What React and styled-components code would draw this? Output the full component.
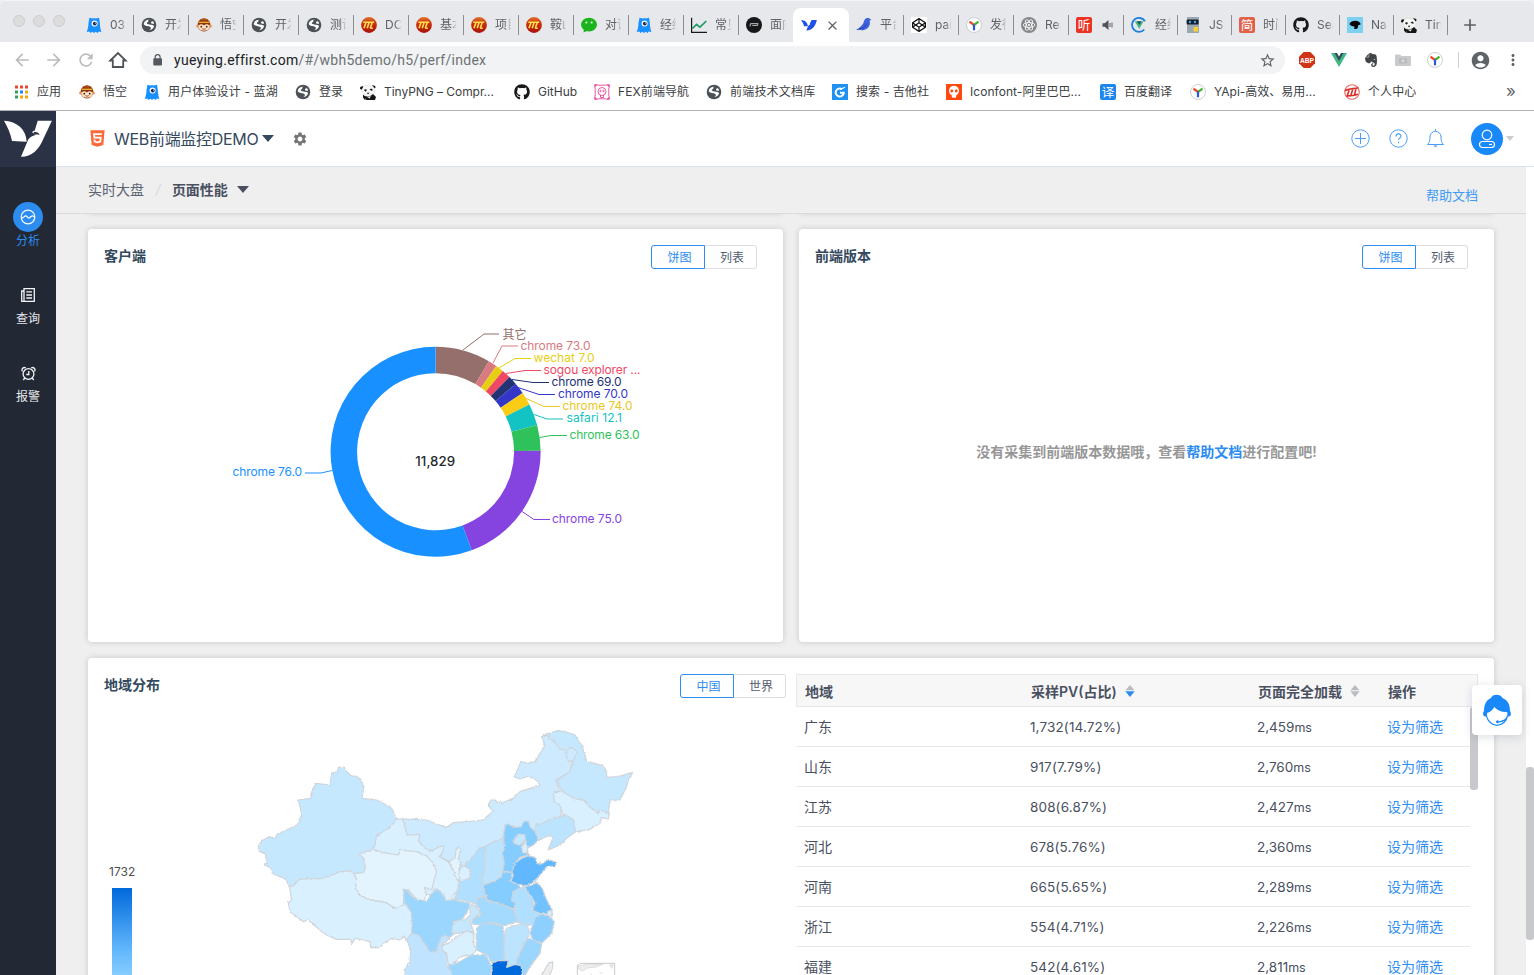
import React from 'react';
import styled, { createGlobalStyle, css } from 'styled-components';
import { MdArrowBack, MdArrowForward, MdRefresh, MdStarBorder, MdAccountCircle, MdMoreVert, MdSettings, MdAdd, MdClose } from 'react-icons/md';
import { FaGithub, FaCodepen, FaEvernote, FaHtml5 } from 'react-icons/fa';

const GlobalStyle = createGlobalStyle`
  * { box-sizing: border-box; }
  html, body { margin: 0; height: 975px; overflow: hidden; }
  body {
    font-family: Inter, "Noto Sans CJK SC", sans-serif;
    font-size: 14px;
    color: #4a5263;
    background: #efefef;
  }
`;

const Window = styled.div`
  position: relative;
  width: 1534px;
  height: 975px;
  display: flex;
  flex-direction: column;
  overflow: hidden;
`;

/* ---------- browser chrome ---------- */

const TabStrip = styled.div`
  flex: none;
  height: 42px;
  display: flex;
  background: #e7e8ec;
  border-top: 1px solid #f3f4f7;
  border-radius: 5px 5px 0 0;
`;

const TrafficLights = styled.div`
  width: 79px;
  height: 40px;
  padding-left: 13px;
  display: flex;
  align-items: center;
  gap: 8px;
`;

const Light = styled.span`
  width: 12px;
  height: 12px;
  border-radius: 50%;
  background: #dcdcdc;
  border: 1px solid #cdcdce;
`;

const TabBox = styled.div`
  position: relative;
  flex: none;
  width: ${(p) => p.$w}px;
  height: 33px;
  margin-top: 7px;
  padding-left: 7px;
  display: flex;
  align-items: center;
  gap: 8px;
  &::after {
    content: '';
    position: absolute;
    right: 0;
    top: 7px;
    width: 1px;
    height: 20px;
    background: ${(p) => (p.$last ? 'transparent' : '#8b8d91')};
  }
`;

const TabText = styled.span`
  width: 16px;
  overflow: hidden;
  white-space: nowrap;
  font-size: 12px;
  line-height: 18px;
  color: #5f6368;
  mask-image: linear-gradient(90deg, #000 65%, transparent 105%);
`;

const ActiveTab = styled.div`
  flex: none;
  width: 56px;
  height: 34px;
  margin: 7px 0 0 -1px;
  padding-left: 8px;
  display: flex;
  align-items: center;
  gap: 8px;
  background: #fff;
  border-radius: 8px 8px 0 0;
  color: #5f6368;
`;

const NewTab = styled.div`
  height: 47px;
  margin-left: 12px;
  display: flex;
  align-items: center;
  color: #5b5e63;
`;

const Toolbar = styled.div`
  flex: none;
  height: 36px;
  display: flex;
  align-items: center;
  background: #fff;
  color: #5f6368;
`;

const NavButtons = styled.div`
  width: 140px;
  padding-left: 12px;
  display: flex;
  align-items: center;
  gap: 12px;
  color: #babcbe;
`;

const Omnibox = styled.div`
  width: 1145px;
  height: 28px;
  padding: 0 9px 0 10px;
  display: flex;
  align-items: center;
  background: #f1f3f4;
  border-radius: 14px;
`;

const Url = styled.div`
  flex: 1;
  margin-left: 9px;
  font-family: Roboto, sans-serif;
  font-size: 14px;
  letter-spacing: 0.27px;
  color: #202124;
  span { color: #6d7176; }
`;

const Extensions = styled.div`
  margin-left: 14px;
  display: flex;
  align-items: center;
  gap: 16px;
`;

const Divider = styled.span`
  width: 1px;
  height: 16px;
  margin: 0 -5px 0 -1px;
  background: #cfd1d3;
`;

const Account = styled.span`
  display: flex;
  margin-right: -3px;
`;

const Bookmarks = styled.div`
  flex: none;
  height: 33px;
  padding: 0 0 4px 13px;
  display: flex;
  align-items: center;
  background: #fff;
  border-bottom: 1px solid #b3b3b5;
`;

const Bookmark = styled.div`
  flex: none;
  width: ${(p) => p.$w}px;
  display: flex;
  align-items: center;
  gap: 8px;
  white-space: nowrap;
  font-size: 12px;
  line-height: 18px;
  color: #3c4043;
  letter-spacing: ${(p) => p.$ls || 0}px;
`;

const More = styled.div`
  margin-left: auto;
  padding: 0 18px 3px 0;
  font-size: 17px;
  line-height: 18px;
  color: #5f6368;
`;

/* ---------- application frame ---------- */

const Main = styled.div`
  flex: 1;
  min-height: 0;
  display: flex;
`;

const Sidebar = styled.nav`
  flex: none;
  width: 56px;
  display: flex;
  flex-direction: column;
  background: #222834;
`;

const LogoBox = styled.div`
  height: 56px;
  margin-bottom: 35px;
  padding: 9px 0 0 4px;
  background: #2c3245;
`;

const SideItem = styled.div`
  height: 78px;
  display: flex;
  flex-direction: column;
  align-items: center;
  font-size: 12px;
  line-height: 17px;
  color: ${(p) => (p.$active ? '#2d8cf0' : '#e8eaed')};
`;

const SideIcon = styled.span`
  width: 30px;
  height: 30px;
  display: flex;
  align-items: center;
  justify-content: center;
  border-radius: 50%;
  color: #f3f4f6;
  background: ${(p) => (p.$active ? '#2d8cf0' : 'transparent')};
`;

const Workspace = styled.div`
  flex: 1;
  min-width: 0;
  display: flex;
  flex-direction: column;
`;

const Header = styled.header`
  flex: none;
  height: 56px;
  padding: 0 20px 0 32px;
  display: flex;
  align-items: center;
  background: #fff;
  border-bottom: 1px solid #d9e2ef;
`;

const AppName = styled.div`
  margin: 0 4px 0 7px;
  font-size: 16px;
  line-height: 24px;
  letter-spacing: -0.3px;
  color: #34495e;
`;

const Caret = styled.span`
  width: 0;
  height: 0;
  border: ${(p) => p.$s || 6}px solid transparent;
  border-top: ${(p) => p.$h || 7}px solid ${(p) => p.$c || '#34495e'};
  border-bottom: 0;
`;

const Gear = styled.span`
  display: flex;
  margin-left: 18px;
  color: #757575;
`;

const HeaderTools = styled.div`
  margin-left: auto;
  display: flex;
  align-items: center;
  gap: 19px;
`;

const Avatar = styled.span`
  width: 32px;
  height: 32px;
  margin: 0 -16px 0 8px;
  border-radius: 50%;
  background: #1989fa;
`;

const Body = styled.div`
  flex: 1;
  min-height: 0;
  display: flex;
`;

const Page = styled.div`
  flex: 1;
  min-width: 0;
  display: flex;
  flex-direction: column;
`;

const Crumbs = styled.div`
  flex: none;
  height: 47px;
  padding: 0 48px 2px 32px;
  display: flex;
  align-items: center;
  color: #5c6472;
  border-bottom: 1px solid #dadada;
  i { margin: 0 11.5px; color: #d3d5d8; font-weight: 300; }
  b { margin-right: 9px; color: #4a5060; }
  a { margin: 10px 0 0 auto; font-size: 13px; color: #409bf5; }
`;

const Track = styled.div`
  flex: none;
  width: 8px;
  padding-top: 600px;
  background: #fff;
`;

const Thumb = styled.div`
  width: 8px;
  height: ${(p) => p.$h}px;
  border-radius: 3px;
  background: #c7c9cc;
`;

const Content = styled.div`
  flex: 1;
  min-height: 0;
  overflow: hidden;
  padding: 0 32px;
  display: flex;
  flex-direction: column;
  gap: 16px;
`;

const CardRow = styled.div`
  flex: none;
  height: ${(p) => p.$h}px;
  margin-top: ${(p) => p.$mt || 0}px;
  display: flex;
  gap: 16px;
`;

const Card = styled.section`
  flex: 1;
  min-width: 0;
  display: flex;
  flex-direction: ${(p) => (p.$row ? 'row' : 'column')};
  background: #fff;
  border-radius: 4px;
  box-shadow: 0 0 6px rgba(0, 0, 0, 0.17);
`;

const CardHead = styled.div`
  flex: none;
  height: 40px;
  padding: 16px ${(p) => p.$pr}px 0 16px;
  display: flex;
  justify-content: space-between;
  align-items: flex-start;
`;

const CardTitle = styled.h2`
  margin: 0;
  font-size: 14px;
  line-height: 21px;
  font-weight: 600;
  color: #34495e;
`;

const Toggle = styled.div`
  display: flex;
`;

const ToggleButton = styled.button`
  width: ${(p) => (p.$active ? 54 : 52)}px;
  height: 24px;
  padding: 0 0 1px 3px;
  font: 12px Inter, "Noto Sans CJK SC", sans-serif;
  background: #fff;
  ${(p) => p.$active
    ? css`color: #2d8cf0; border: 1px solid #2d8cf0; border-radius: 3px 0 0 3px;`
    : css`color: #515a6e; border: 1px solid #dcdee2; border-left: 0; border-radius: 0 3px 3px 0;`}
`;

const Empty = styled.div`
  flex: 1;
  padding-top: 171px;
  text-align: center;
  line-height: 24px;
  font-weight: 600;
  color: #979797;
  span { color: #2d8cf0; }
`;

const ChartSvg = styled.svg`
  display: block;
  font-family: Inter, "Noto Sans CJK SC", sans-serif;
`;

const RegionPane = styled.div`
  flex: none;
  width: 708px;
  display: flex;
  flex-direction: column;
`;

const MapArea = styled.div`
  display: flex;
`;

const Legend = styled.div`
  width: 152px;
  padding: 165px 0 0 21px;
  font-size: 12px;
  line-height: 18px;
  color: #4f4f4f;
`;

const LegendBar = styled.div`
  width: 20px;
  height: 120px;
  margin: 7px 0 0 3px;
  background: linear-gradient(#0069db, #5fb5fb 60px, #85ccff 87px);
`;

const Table = styled.div`
  width: 682px;
  margin-top: 16px;
`;

const HeadRow = styled.div`
  height: 33px;
  padding: 0 0 0 8px;
  display: grid;
  grid-template-columns: 226px 227px 130px 1fr;
  align-items: center;
  border: 1px solid #e6e8eb;
  background: #f7f7f8;
  font-weight: 600;
  color: #495060;
`;

const HeadCell = styled.span`
  display: flex;
  align-items: center;
  gap: 8px;
`;

const TableBody = styled.div`
  display: flex;
`;

const Rows = styled.div`
  width: 674px;
`;

const Row = styled.div`
  height: 40px;
  padding: 0 0 0 8px;
  display: grid;
  grid-template-columns: 226px 227px 130px 1fr;
  align-items: center;
  line-height: 20px;
  border-bottom: 1px solid #e6e8eb;
  color: #495060;
  small { font-size: 12.5px; }
  a { color: #2d8cf0; }
`;

const Num = styled.span`
  padding-top: 1px;
  font-size: 13.5px;
  letter-spacing: ${(p) => (p.$wide ? 0.13 : 0)}px;
`;

const Support = styled.div`
  position: absolute;
  left: 1472px;
  top: 685px;
  width: 50px;
  height: 50px;
  padding: 9px 0 0 10px;
  background: #fff;
  border-radius: 4px;
  box-shadow: 0 2px 10px rgba(40, 60, 90, 0.17);
`;

/* ---------- favicons ---------- */

const Glyph = styled.svg`
  flex: none;
  display: block;
`;

const Ico = ({ children, s = 16, vb = 16 }) => (
  <Glyph width={s} height={s} viewBox={`0 0 ${vb} ${vb}`}>{children}</Glyph>
);

const Lanhu = () => (
  <Ico>
    <path d="M3.500.800 6.500 1.500c1-.3 2.500-.3 3.500 0l3-.7.8 5c.2 3.500.5 5.900 1.600 9.300l-2.700-.5-1 1.300-2-1.200-1.700 1.200-1.600-1.200-2 1.200-1-1.300L.7 15c1.300-3.300 1.700-6 1.800-9.300z" fill="#1890ff" />
    <circle cx="8.600" cy="6.600" r="3" fill="#fff" />
    <circle cx="8.800" cy="6.600" r="1.900" fill="#14284b" />
    <circle cx="9.500" cy="6" r=".6" fill="#fff" />
  </Ico>
);
const Globe = () => (
  <Ico>
    <circle cx="8" cy="8" r="7.300" fill="#4b5157" />
    <path d="M2.800 7.600C2.500 4.500 5.500 2.600 8.500 2.700 7 3.300 6.500 4.200 7.500 4.700c-1.500.3-2.500 1.600-1 2.300 2 .8 5 .3 6.600 2-.6 2.400-2.600 4-5 4.200 1.800-1 2.400-2.200 1.200-3.200C7.500 9 4.300 9.300 2.800 7.600z" fill="#fff" />
    <path d="M10 5.200c.5-1 1.500-1.200 2-.9.600.7 1 1.500 1.100 2.300-1.300.5-3.300 0-3.100-1.400z" fill="#fff" />
  </Ico>
);
const Monkey = () => (
  <Ico>
    <path d="M1.800 6.500C2.500 3 5 2 8 2s5.500 1 6.200 4.500c.8 4-2 8-6.200 8s-7-4-6.200-8z" fill="#8a3410" />
    <path d="M3.500 2.500 8 1l4.500 1.500L10 3.400H6z" fill="#b14f1b" />
    <path d="M2.500 5.300h11" stroke="#f2b52b" strokeWidth="1.300" />
    <circle cx="1.700" cy="9" r="1.600" fill="#e58f54" /><circle cx="14.300" cy="9" r="1.600" fill="#e58f54" />
    <path d="M2.700 8.500c1.500-1.700 3.800-1.300 5.300 0 1.500-1.300 3.800-1.700 5.300 0 .8 3.300-1.500 5.200-5.300 5.200S1.900 11.800 2.700 8.500z" fill="#fde3c6" />
    <circle cx="5.300" cy="9.700" r=".9" fill="#3c1d0d" /><circle cx="10.700" cy="9.700" r=".9" fill="#3c1d0d" />
    <path d="M6.300 11.700q1.700 1 3.400 0" stroke="#a5472c" fill="none" />
  </Ico>
);
const GoldM = () => (
  <Ico>
    <defs><linearGradient id="gm" x1="0" y1="0" x2="0" y2="1"><stop offset="0" stopColor="#e0722c" /><stop offset=".4" stopColor="#cc2f0c" /><stop offset="1" stopColor="#a8140a" /></linearGradient></defs>
    <circle cx="8" cy="8" r="7.900" fill="url(#gm)" />
    <path d="M2.300 5.200h10.900M3 11.300l2-5.800M6.200 11.300l1.900-5.800M9.300 11.200l1.900-5.700M9.200 11.200h2.600" stroke="#ffdf4d" strokeWidth="1.600" fill="none" />
  </Ico>
);
const RedM = () => (
  <Ico>
    <circle cx="8" cy="8" r="7.300" fill="#fff" stroke="#e36a5e" strokeWidth="1.100" />
    <path d="M1 6.800C4 4.500 8 5 14.500 3.800M3.300 11.500 5.200 6M6.800 11.500 8.700 5.500M10.300 11.300 12 5M2 12.300c4-1 7-.2 12-2" stroke="#d9302c" strokeWidth="1.600" fill="none" />
  </Ico>
);
const WeChat = () => (
  <Ico>
    <ellipse cx="8" cy="7.600" rx="8" ry="6.800" fill="#1cb41c" /><path d="M3 12l-.5 3.500L7 13.500z" fill="#1cb41c" />
    <circle cx="5.400" cy="5.600" r="1" fill="#fff" /><circle cx="10.600" cy="5.600" r="1" fill="#fff" />
  </Ico>
);
const ChartFav = () => (
  <Ico><path d="M.6.800v14.600H16" stroke="#181818" strokeWidth="1.200" fill="none" /><path d="m1.500 11.500 4-4 3.500 2.700L15.300 4" stroke="#1d9c63" strokeWidth="1.700" fill="none" /></Ico>
);
const DarkDisc = () => (
  <Ico><circle cx="8" cy="8" r="8" fill="#17181a" /><path d="M4.200 9.500V7.600q0-1 1-1h6.600v.9q0 1-1 1H6.300" stroke="#a9a9a9" strokeWidth="1.100" fill="none" /></Ico>
);
const BlueBird = () => (
  <Ico><path d="M0 3.300c4 0 6.300 1.700 6.900 6L3 9.200C2.500 6.500 1.200 5 0 3.300z" fill="#1f51ea" /><path d="M10.700 3h5.200c-1.500 5.500-4 10.700-10.600 10.500C6.500 11 7 8.300 9.200 7.300 9 6.500 8.800 6.200 9.200 5.800z" fill="#1f51ea" /></Ico>
);
const Pigeon = () => (
  <Ico><path d="M0 12.500c3-.5 4.500-3 6.500-5C8 6 7.500 3.500 9 2.200c1-1.100 3-1.500 4.500-.7l2 1.500-2 .6c1.300 3.500-.3 7.200-3.500 8.600L5.500 13.800l.5-1.300C4 13.200 2 13.200 0 12.500z" fill="#3c62dd" /><path d="M3 11.700c3 .2 6-1 7.500-5" stroke="#223e9c" fill="none" /></Ico>
);
const CodepenFav = () => <Ico><rect width="16" height="16" fill="#fff" /><FaCodepen x="1" y="1" size={14} color="#111" /></Ico>;
const YApi = () => (
  <Ico>
    <circle cx="8" cy="8" r="7.500" fill="#fff" stroke="#c5c9cf" strokeWidth=".9" />
    <path d="M8 8 3.500 4.700" stroke="#f0442c" strokeWidth="2.200" /><path d="m8 8 4.500-3.300" stroke="#42b72a" strokeWidth="2.200" /><path d="M8 7.500v5.800" stroke="#2756e8" strokeWidth="2.200" />
  </Ico>
);
const Atom = () => (
  <Ico>
    <circle cx="8" cy="8" r="8" fill="#85888b" />
    <g fill="none" stroke="#fff" strokeWidth=".8"><ellipse cx="8" cy="8" rx="5.800" ry="2.500" /><ellipse cx="8" cy="8" rx="5.800" ry="2.500" transform="rotate(60 8 8)" /><ellipse cx="8" cy="8" rx="5.800" ry="2.500" transform="rotate(120 8 8)" /></g>
    <circle cx="8" cy="8" r="1.100" fill="#fff" />
  </Ico>
);
const CharFav = ({ c, bg, r = 2 }) => (
  <Ico><rect width="16" height="16" rx={r} fill={bg} /><text x="8" y="12.500" fontSize="12.500" textAnchor="middle" fill="#fff" fontFamily="Noto Sans CJK SC, sans-serif">{c}</text></Ico>
);
const VueRing = () => (
  <Ico><path d="M14 4.200A7 7 0 1 0 13.300 12.500" stroke="#1d7fe0" strokeWidth="1.800" fill="none" /><path d="M3.800 4.200h8.800L8.200 12z" fill="#41b883" /><path d="M6 4.200h4.400L8.200 8z" fill="#34495e" /></Ico>
);
const VueFav = () => <Ico><path d="M0 1h16L8 15z" fill="#41b883" /><path d="M3.500 1h9L8 9z" fill="#35495e" /><path d="M6 1h4L8 4.500z" fill="#fff" /></Ico>;
const Robot = () => (
  <Ico><rect x="2" width="12" height="16" fill="#9ba8b3" /><rect x="1.600" y="2.500" width="12" height="5" rx="1" fill="#17202a" /><circle cx="5" cy="5" r="1.200" fill="#46a6f1" /><circle cx="10" cy="5" r="1.200" fill="#46a6f1" /><rect x="8.500" y="10" width="4.500" height="4.500" fill="#f8d02f" /></Ico>
);
const Duck = () => (
  <Ico><rect width="16" height="16" fill="#7cd0f0" /><path d="M2.500 7c1-2.500 4.500-3.700 7.500-3 2 .7 3.300 1.700 3.800 3.200L11 8.500v2L9.500 12H7.300V9.500C5 9.300 3 8.500 2.500 7z" fill="#060606" /></Ico>
);
const Panda = () => (
  <Ico>
    <path d="M2 3C4 .800 11.500.800 14 3.500c2 3 .5 6.500-1.500 7.500H5C2.500 10 1.500 6 2 3z" fill="#f7f7f5" stroke="#cfcfcc" strokeWidth=".4" />
    <path d="M0 4.200C.2 2.500 2 1.800 3.300 2.800L1.800 5.500C1 5.500 0 5.200 0 4.200zM12 1.300c1.500-.5 3.500.5 3.700 2L14.500 4.500C14 3 13 2.200 12 1.300zM4 6c1-1.200 2.500-.8 3 0L5.500 7.700zM9.500 5.800c.5-1 2-1.500 2.800-.8l.2 2zM6.800 8.800h2.700L8 10.200zM3 10.500c2 2.500 6 3 10-.5L16 13l-1 3H5L3 13.500z" fill="#161616" />
    <path d="m7 12.700 4-.5-1.500 2.300zM5 14.500l1.500 1H5z" fill="#eee" />
  </Ico>
);
const FexFav = () => (
  <Ico><g fill="none" stroke="#e8499a" strokeWidth=".9"><path d="M3.500 1.200h9M1.200 3.500v9M14.800 3.500v9M3.500 14.800h9" /><circle cx="8" cy="7.500" r="4" /><circle cx="6.500" cy="7" r=".7" /><circle cx="9.500" cy="7" r=".7" /><path d="M6.500 11v2.500h3V11" /></g><g fill="#e8499a"><path d="M.3.300h3.700L.3 4zM15.700.300V4L12 .300zM.3 15.700V12L4 15.700zM15.700 15.700H12l3.700-3.700z" /></g></Ico>
);
const Guitar = () => (
  <Ico><rect width="16" height="16" fill="#2090f3" /><path d="M10 5.200A4 4 0 1 0 11.700 8.800H8" stroke="#fff" strokeWidth="2" fill="none" /><path d="m8.500 5.200 4.500-2" stroke="#fff" strokeWidth="1.200" /></Ico>
);
const Iconfont = () => (
  <Ico><rect width="16" height="16" fill="#ff4710" /><circle cx="8" cy="6.800" r="5" fill="#fff" /><rect x="5.800" y="10.500" width="4.400" height="3.300" rx="1" fill="#fff" /><circle cx="5.800" cy="7" r="1.400" fill="#ff4710" /><circle cx="10.200" cy="7" r="1.400" fill="#ff4710" /></Ico>
);
const Apps = () => (
  <Ico>
    {['#ea4335', '#ea4335', '#ea4335', '#34a060', '#1a84ff', '#f4a80a', '#34a060', '#f4a80a', '#f4a80a'].map((c, i) => (
      <rect key={i} x={2 + (i % 3) * 5} y={1.5 + Math.floor(i / 3) * 5} width="3" height="3" fill={c} />
    ))}
  </Ico>
);
const GithubFav = () => <Ico><FaGithub size={16} color="#17181a" /></Ico>;
const Abp = () => (
  <Ico><path d="M4.700 0h6.600L16 4.700v6.600L11.300 16H4.700L0 11.300V4.700z" fill="#cf3417" /><text x="8" y="11" textAnchor="middle" fontSize="8" fontWeight="700" fill="#fff" fontFamily="Liberation Sans, sans-serif" textLength="14" lengthAdjust="spacingAndGlyphs">ABP</text></Ico>
);
const Folder = () => (
  <Ico><path d="M0 3.500q0-1 1-1h4l1.500 1.500H15q1 0 1 1V13q0 1-1 1H1q-1 0-1-1z" fill="#c9cbcd" /><rect x="4" y="6" width="8" height="5.500" rx="1" fill="#b8bbbe" /><circle cx="8" cy="8.700" r="1.700" fill="#d5d7d8" /></Ico>
);
const Speaker = () => (
  <Ico><path d="M2.500 6.300h2.200L8.500 3v10L4.700 9.700H2.500z" fill="#4f5358" /><path d="M10 6v4M12 5.500v5" stroke="#5f6368" /></Ico>
);

const TABS_LEFT = [
  [Lanhu, '03'], [Globe, '开发'], [Monkey, '悟空'], [Globe, '开发'], [Globe, '测试'], [GoldM, 'DC'], [GoldM, '基本'],
  [GoldM, '项目'], [GoldM, '鞍山'], [WeChat, '对话'], [Lanhu, '经纬'], [ChartFav, '常见'], [DarkDisc, '面向'],
];
const Ting = () => <CharFav c="听" bg="#ec3323" />;
const Jian = () => <CharFav c="简" bg="#e2604a" />;
const Yi = () => <CharFav c="译" bg="#1c86ee" />;
const TABS_RIGHT = [
  [Pigeon, '平台', 55], [CodepenFav, 'pai', 55], [YApi, '发行', 55], [Atom, 'Rea', 55], [Ting, null, 55], [VueRing, '经纬', 54],
  [Robot, 'JS', 54], [Jian, '时间', 54], [GithubFav, 'Sea', 54], [Duck, 'Nat', 54], [Panda, 'Tiny', 54],
];
const BOOKMARKS = [
  [Apps, '应用', 66], [Monkey, '悟空', 65], [Lanhu, '用户体验设计 - 蓝湖', 151, 0.15], [Globe, '登录', 65],
  [Panda, 'TinyPNG – Compr...', 154, -0.05], [GithubFav, 'GitHub', 80], [FexFav, 'FEX前端导航', 112, 0.1], [Globe, '前端技术文档库', 126, 0.2],
  [Guitar, '搜索 - 吉他社', 114, 0.1], [Iconfont, 'Iconfont-阿里巴巴...', 154, 0.05], [Yi, '百度翻译', 90], [YApi, 'YApi-高效、易用...', 154], [RedM, '个人中心', 90, 0.1],
];

/* ---------- donut chart ---------- */

const CX = 347.6;
const CY = 182.7;
const SLICES = [
  [0, 30.5, '#946f6b'], [30.5, 35.3, '#d97a80'], [35.3, 39.8, '#e6cf13'], [39.8, 44.7, '#ef4864'], [44.7, 49.8, '#223273'],
  [49.8, 56, '#3436c7'], [56, 63.3, '#facc14'], [63.3, 75.2, '#13c2c2'], [75.2, 89.5, '#2fc25b'], [89.5, 159.9, '#8543e0'], [159.9, 360, '#1890ff'],
];
const pt = (deg, r) => {
  const a = (deg * Math.PI) / 180;
  return `${(CX + r * Math.sin(a)).toFixed(2)} ${(CY - r * Math.cos(a)).toFixed(2)}`;
};
const arc = (a, b) => {
  const big = b - a > 180 ? 1 : 0;
  return `M${pt(a, 105)}A105 105 0 ${big} 1 ${pt(b, 105)}L${pt(b, 78.5)}A78.5 78.5 0 ${big} 0 ${pt(a, 78.5)}Z`;
};
/* label: text, x, baseline, width, colour, leader points */
const LABELS = [
  ['其它', 414.5, 69.5, 24, '#946f6b', '375,81 396,65 411,65'],
  ['chrome 73.0', 432.5, 81, 70, '#d97a80', '405,94 414,77 430,77'],
  ['wechat 7.0', 445.5, 93, 61, '#e6cf13', '411,99 427,89.5 443,89.5'],
  ['sogou explorer ...', 455.5, 105, 97, '#ef4864', '418,104.5 437,101.5 453,101.5'],
  ['chrome 69.0', 463.5, 117, 70, '#223273', '424,110.5 445,113.5 461,113.5'],
  ['chrome 70.0', 470, 129, 70, '#3436c7', '430,118.5 451,125.5 467,125.5'],
  ['chrome 74.0', 474.5, 141, 70, '#e9c727', '437,129 456,137.5 472,137.5'],
  ['safari 12.1', 478.5, 153, 55.5, '#13c2c2', '446,145.5 459,150 475,150'],
  ['chrome 63.0', 481.5, 170, 70, '#2fc25b', '451.5,168.5 463,166.5 479,166.5'],
  ['chrome 75.0', 464, 254, 70, '#8543e0', '434,242.5 446,250.5 462,250.5'],
  ['chrome 76.0', 144.5, 207, 69.5, '#1890ff', '244,201.5 233,204 217,204'],
];

const Donut = () => (
  <ChartSvg width="695" height="373" viewBox="0 0 695 373">
    {SLICES.map(([a, b, c]) => <path key={a} d={arc(a, b)} fill={c} />)}
    {LABELS.map(([t, x, y, w, c, p]) => (
      <g key={t}>
        <polyline points={p} fill="none" stroke={c} />
        <text x={x} y={y} fontSize="12" fill={c} textLength={w}>{t}</text>
      </g>
    ))}
    <text x={CX - 0.4} y="197" fontSize="13.3" fontWeight="500" fill="#26292e" textAnchor="middle">11,829</text>
  </ChartSvg>
);

/* ---------- province map (three units to the pixel) ---------- */

const PROVINCES = [
  ['#cdeaff', '487,297 560,300 590,312 620,322 640,308 700,303 730,300 760,272 745,258 752,240 765,240 772,247 790,247 820,235 840,215 880,202 900,198 895,185 880,175 860,170 840,177 822,170 835,145 842,125 865,130 885,125 900,100 915,75 905,50 920,42 955,32 990,85 1010,95 995,130 990,155 948,180 960,215 945,215 945,240 960,255 965,290 895,315 885,335 870,345 820,345 792,352 760,368 735,380 718,390 700,415 685,445 650,475 625,423 600,410 605,400 612,378 595,380 575,395 555,385 535,362 540,342 525,345 500,345 495,320'],
  ['#d8f0ff', '470,297 487,297 495,320 500,345 525,345 540,342 535,362 555,385 575,395 592,382 612,378 608,395 598,410 625,425 640,450 655,480 655,510 640,525 635,540 618,542 610,520 585,505 575,525 545,520 560,405 480,405 440,408 398,388 405,375 408,350 425,337 452,320'],
  ['#d8f0ff', '665,435 690,445 693,470 670,487 653,480 655,460'],
  ['#c5e8ff', '295,142 313,142 320,155 335,168 347,168 362,178 372,200 366,235 410,240 430,250 455,265 470,297 452,320 425,337 408,350 405,375 398,388 358,402 370,415 376,440 372,458 342,460 330,453 300,455 270,468 240,477 200,475 175,480 160,498 148,500 138,478 120,470 100,462 95,447 72,432 82,430 75,400 58,395 55,378 65,362 88,350 105,355 112,342 140,330 172,315 185,285 178,250 172,240 212,235 215,215 228,190 270,195 275,160 292,155'],
  ['#d8f0ff', '148,500 160,498 175,480 200,475 240,477 270,468 300,455 330,453 342,460 350,480 347,505 360,525 385,538 440,548 465,565 490,545 513,575 517,610 515,640 500,660 490,648 480,660 455,655 430,672 420,683 392,683 390,665 370,660 345,655 335,672 332,658 290,658 265,648 245,635 205,600 190,605 170,590 150,575 145,548 155,540'],
  ['#e3f4ff', '358,402 398,388 430,398 475,405 482,388 500,392 530,395 560,408 580,430 590,455 582,480 575,510 553,502 560,525 550,545 530,540 505,510 492,508 490,555 465,565 440,548 385,538 360,525 347,505 350,480 342,460 372,458 376,440 370,415'],
  ['#c5e8ff', '905,50 920,42 955,32 985,38 1005,45 1025,75 1035,105 1040,125 1090,137 1100,155 1100,172 1135,170 1178,157 1165,180 1160,200 1140,240 1110,240 1105,280 1080,270 1075,280 1050,262 1030,240 1000,235 965,212 950,180 990,155 1000,125 985,122 980,110 985,88 960,88 940,60 925,55 930,45'],
  ['#cdeaff', '978,92 995,82 1012,95 1000,122 985,124 980,110'],
  ['#d8f0ff', '940,220 965,212 1000,235 1030,240 1050,262 1075,280 1080,270 1108,280 1105,297 1085,293 1080,310 1050,328 1015,335 1005,330 1000,300 970,285 960,255 943,245'],
  ['#bde4ff', '890,307 895,315 940,295 965,290 975,283 1000,300 1007,335 980,355 960,375 925,390 938,355 930,345 915,352 895,362 890,345 883,335'],
  ['#85ccff', '795,315 805,313 825,322 845,320 850,305 865,303 870,320 885,335 895,360 880,375 862,385 865,405 840,412 825,430 817,457 787,453 792,430 787,400 793,380 790,352'],
  ['#c5e8ff', '822,357 835,342 857,345 855,362 840,375 822,370'],
  ['#d8f0ff', '845,378 857,360 863,385 860,400 847,397'],
  ['#bde4ff', '738,378 760,365 790,355 793,380 787,400 792,430 787,455 785,470 760,485 730,495 727,480 735,440 733,400'],
  ['#b0dfff', '718,385 738,378 733,400 735,440 727,480 730,500 735,530 712,535 708,552 665,540 640,540 655,510 657,485 690,475 692,450 672,435 695,415'],
  ['#e3f4ff', '655,380 663,390 655,415 662,430 655,465 660,480 650,478 640,450 625,425 645,415 648,390'],
  ['#62b8ff', '815,457 825,430 845,415 865,407 885,412 890,430 905,432 925,418 950,428 945,438 920,440 900,465 880,487 860,497 830,492 812,485 820,465'],
  ['#85ccff', '730,495 760,485 785,470 787,455 817,457 812,485 838,497 838,507 820,515 815,540 828,550 822,568 800,560 770,548 745,545 735,520'],
  ['#b0dfff', '838,505 855,500 865,520 875,530 880,550 878,570 900,580 885,612 860,617 830,605 825,570 828,550 815,540 820,515'],
  ['#72c2ff', '855,500 880,495 887,487 905,500 920,540 937,570 925,583 900,580 878,572 885,550 875,530 865,520'],
  ['#d8f0ff', '922,575 935,570 938,587 923,590'],
  ['#a5daff', '712,535 735,530 745,545 770,548 822,568 830,605 795,617 750,607 725,615 695,612 700,595 722,585 718,565 708,553'],
  ['#9bd6ff', '492,508 505,512 512,525 530,540 560,543 575,520 590,507 605,520 618,542 640,540 690,550 685,570 665,600 640,605 645,640 625,655 605,650 595,670 590,695 570,697 550,665 535,645 515,640 517,600 513,575 492,545'],
  ['#c0e4ff', '515,640 535,645 550,665 570,697 590,695 600,660 612,645 630,655 605,675 610,695 622,705 620,735 650,775 495,775 495,745 510,725 512,690 500,660'],
  ['#c5e8ff', '690,557 705,555 722,580 700,595 690,605 702,637 680,635 650,640 635,640 638,615 655,600 675,600 690,585'],
  ['#d8f0ff', '608,675 625,670 645,655 660,645 680,632 702,640 700,670 710,690 695,705 660,710 640,732 625,735 620,700 605,690'],
  ['#9bd6ff', '625,735 650,730 695,705 735,703 745,720 755,740 750,775 640,775'],
  ['#a5daff', '710,625 725,612 755,610 790,617 792,660 795,722 755,727 745,710 735,702 710,690 708,650'],
  ['#bde4ff', '795,635 800,625 830,615 860,613 870,640 855,665 840,695 830,720 830,740 800,742 793,720 792,680'],
  ['#8dcfff', '885,595 900,582 925,588 943,605 935,640 905,670 880,662 870,640'],
  ['#9bd6ff', '862,655 880,660 905,672 900,700 870,740 850,775 830,775 830,720 845,690'],
  ['#066bdc', '753,775 757,728 775,722 805,722 800,742 825,733 843,737 850,775'],
  ['#eeeeee', '900,775 925,730 938,725 938,745 925,775'],
];

const ChinaMap = () => (
  <ChartSvg width="430" height="277" viewBox="0 -66 1290 831">
    <defs>
      <filter id="coast" x="0" y="0" width="1" height="1">
        <feTurbulence type="fractalNoise" baseFrequency="0.13" numOctaves="2" seed="4" />
        <feDisplacementMap in="SourceGraphic" scale="8" xChannelSelector="R" yChannelSelector="G" />
      </filter>
    </defs>
    <g filter="url(#coast)" stroke="#cfd5da" strokeWidth="3.6" strokeLinejoin="round">
      {PROVINCES.map(([c, p], i) => <polygon key={i} points={p} fill={c} />)}
    </g>
    <path d="M1012 775V736l9-6h103v45" fill="none" stroke="#c9c9c9" strokeWidth="3" />
    <path d="M1016 738l24-5h48l-20 8-26 3-14 9-12-6zM1108 736l12-3-4 12zM1050 760l8 8M1078 757l10 4" fill="#eee" stroke="#d0d0d0" strokeWidth="2" />
  </ChartSvg>
);

/* ---------- small parts ---------- */

const Switcher = ({ a, b }) => (
  <Toggle><ToggleButton $active>{a}</ToggleButton><ToggleButton>{b}</ToggleButton></Toggle>
);

const Sorter = ({ down = '#b9bcc3' }) => (
  <Glyph width="10" height="12" viewBox="0 0 10 12"><path d="M5 0 9.500 5.200H.5z" fill="#b9bcc3" /><path d="M.3 6.300h9.400L5 12z" fill={down} /></Glyph>
);

const REGIONS = [
  ['广东', '1,732(14.72%)', '2,459'], ['山东', '917(7.79%)', '2,760'], ['江苏', '808(6.87%)', '2,427'], ['河北', '678(5.76%)', '2,360'],
  ['河南', '665(5.65%)', '2,289'], ['浙江', '554(4.71%)', '2,226'], ['福建', '542(4.61%)', '2,811'],
];

const Tab = ({ item: [Icon, text, w = 55], last }) => (
  <TabBox $w={w} $last={last}>
    <Icon />
    {text ? <TabText>{text}</TabText> : <Speaker />}
  </TabBox>
);

export default function App() {
  return (
    <Window>
      <GlobalStyle />
      <TabStrip>
        <TrafficLights><Light /><Light /><Light /></TrafficLights>
        {TABS_LEFT.map((t, i) => <Tab key={i} item={t} last={i === TABS_LEFT.length - 1} />)}
        <ActiveTab><BlueBird /><MdClose size={15} /></ActiveTab>
        {TABS_RIGHT.map((t, i) => <Tab key={i} item={t} />)}
        <NewTab><MdAdd size={20} /></NewTab>
      </TabStrip>

      <Toolbar>
        <NavButtons>
          <MdArrowBack size={20} /><MdArrowForward size={20} /><MdRefresh size={20} />
          <Glyph width="20" height="20" viewBox="0 0 20 20"><path d="M2.300 10.500 10 3l7.700 7.500h-2.500V17H4.800v-6.500z" fill="none" stroke="#505459" strokeWidth="1.800" /></Glyph>
        </NavButtons>
        <Omnibox>
          <Glyph width="15" height="15" viewBox="0 0 15 15"><rect x="3.300" y="5.300" width="8.700" height="7.200" rx="1" fill="#55595e" /><path d="M5.200 6V4a2.450 2.450 0 0 1 4.900 0v2" fill="none" stroke="#55595e" strokeWidth="1.200" /></Glyph>
          <Url>yueying.effirst.com<span>/#/wbh5demo/h5/perf/index</span></Url>
          <MdStarBorder size={17} />
        </Omnibox>
        <Extensions>
          <Abp /><VueFav /><FaEvernote size={16} color="#414548" /><Folder /><YApi /><Divider /><Account><MdAccountCircle size={21} /></Account><MdMoreVert size={18} />
        </Extensions>
      </Toolbar>

      <Bookmarks>
        {BOOKMARKS.map(([Icon, text, w, ls], i) => <Bookmark key={i} $w={w} $ls={ls}><Icon />{text}</Bookmark>)}
        <More>»</More>
      </Bookmarks>

      <Main>
        <Sidebar>
          <LogoBox>
            <Glyph width="48" height="38" viewBox="0 0 48 38">
              <path d="M0 .7C13 1.500 22 9 22.700 21.700L8 21C6.500 13 3.500 7 0 .7z" fill="#fff" />
              <path d="M33.700.7h14.200L39.300 19C35 30 27 37 17 36.700l6.300-15c1.500-4 4.500-5.700 8-6.700-1-1.500-2.300-2.300-3.300-2.700.5-1 1.500-1.600 2.700-1.600z" fill="#fff" />
              <path d="M29.500 12.200c2.500-.8 5.500.3 6.200 2.800-1.700-.6-3.500-.6-5-.2z" fill="#2c3245" />
            </Glyph>
          </LogoBox>
          <SideItem $active>
            <SideIcon $active>
              <Glyph width="16" height="16" viewBox="0 0 16 16"><circle cx="8" cy="8" r="6.800" fill="none" stroke="#fff" strokeWidth="1.200" /><path d="M1.500 8.500c1.500 1 2-.2 3.200-1.300S7 7.500 7.800 8.500s1.700.5 2.700-.5 2.500-2 4.200.3" fill="none" stroke="#fff" strokeWidth="1.200" /></Glyph>
            </SideIcon>
            分析
          </SideItem>
          <SideItem>
            <SideIcon>
              <Glyph width="14" height="14" viewBox="0 0 14 14"><path d="M3 .7h10.300v12.600H.7V3H3zM3 3v10M5.300 3.800H11M5.300 7H11M5.300 10H11" fill="none" stroke="currentColor" strokeWidth="1.300" /></Glyph>
            </SideIcon>
            查询
          </SideItem>
          <SideItem>
            <SideIcon>
              <Glyph width="15" height="15" viewBox="0 0 15 15"><circle cx="7.500" cy="8" r="5.400" fill="none" stroke="currentColor" strokeWidth="1.300" /><path d="M7.800 5v3.500H5.300M1.500 5.300C0 3 2.500.5 4.800 2M13.500 5.300C15 3 12.500.5 10.200 2M3.800 12l-1.500 2M11.200 12l1.500 2" fill="none" stroke="currentColor" strokeWidth="1.300" /></Glyph>
            </SideIcon>
            报警
          </SideItem>
        </Sidebar>

        <Workspace>
          <Header>
            <FaHtml5 size={19} color="#fd6a39" />
            <AppName>WEB前端监控DEMO</AppName>
            <Caret />
            <Gear><MdSettings size={16} /></Gear>
            <HeaderTools>
              <Glyph width="19" height="19" viewBox="0 0 19 19"><path d="M9.500 4v11M4 9.500h11" stroke="#4a9df5" /><circle cx="9.500" cy="9.500" r="8.700" fill="none" stroke="#4a9df5" /></Glyph>
              <Glyph width="19" height="19" viewBox="0 0 19 19"><circle cx="9.500" cy="9.500" r="8.700" fill="none" stroke="#4a9df5" /><path d="M7 7.500c0-3.500 5-3.300 5-.4 0 2-2.500 2-2.500 4M9.500 12.800v1.400" fill="none" stroke="#4a9df5" strokeWidth="1.100" /></Glyph>
              <Glyph width="17" height="19" viewBox="0 0 17 19"><path d="M.5 15.500h16C14.500 13.500 14 12 14 8c0-7.500-11-7.500-11 0 0 4-.5 5.500-2.500 7.500zM8.500 0v2" fill="none" stroke="#4a9df5" /><path d="M6.500 16.500h4q-2 3-4 0z" fill="#4a9df5" /></Glyph>
              <Avatar>
                <Glyph width="32" height="32" viewBox="0 0 32 32"><g fill="none" stroke="#fff" strokeWidth="1.200"><circle cx="16" cy="12" r="4.800" /><rect x="8.500" y="18.500" width="15" height="6" rx="3" /><path d="M18 21.500h3" /></g></Glyph>
              </Avatar>
              <Caret $s={4} $h={5} $c="#c9ccd1" />
            </HeaderTools>
          </Header>

          <Body>
            <Page>
              <Crumbs>实时大盘<i>/</i><b>页面性能</b><Caret $c="#4a5060" /><a>帮助文档</a></Crumbs>
              <Content>
                <CardRow $h={10} $mt={-11}><Card /><Card /></CardRow>
                <CardRow $h={413}>
                  <Card>
                    <CardHead $pr={26}><CardTitle>客户端</CardTitle><Switcher a="饼图" b="列表" /></CardHead>
                    <Donut />
                  </Card>
                  <Card>
                    <CardHead $pr={26}><CardTitle>前端版本</CardTitle><Switcher a="饼图" b="列表" /></CardHead>
                    <Empty>没有采集到前端版本数据哦，查看<span>帮助文档</span>进行配置吧!</Empty>
                  </Card>
                </CardRow>
                <CardRow $h={400}>
                  <Card $row>
                    <RegionPane>
                      <CardHead $pr={10}><CardTitle>地域分布</CardTitle><Switcher a="中国" b="世界" /></CardHead>
                      <MapArea>
                        <Legend>1732<LegendBar /></Legend>
                        <ChinaMap />
                      </MapArea>
                    </RegionPane>
                    <Table>
                      <HeadRow>
                        <HeadCell>地域</HeadCell>
                        <HeadCell>采样PV(占比)<Sorter down="#2d8cf0" /></HeadCell>
                        <HeadCell>页面完全加载<Sorter /></HeadCell>
                        <HeadCell>操作</HeadCell>
                      </HeadRow>
                      <TableBody>
                        <Rows>
                          {REGIONS.map(([name, pv, ms]) => (
                            <Row key={name}><span>{name}</span><Num $wide>{pv}</Num><Num>{ms}<small>ms</small></Num><a>设为筛选</a></Row>
                          ))}
                        </Rows>
                        <Thumb $h={83} />
                      </TableBody>
                    </Table>
                  </Card>
                </CardRow>
              </Content>
            </Page>
            <Track><Thumb $h={173} /></Track>
          </Body>
        </Workspace>
      </Main>

      <Support>
        <Glyph width="30" height="34" viewBox="0 0 30 34">
          <path d="M9 4C10-.5 19-.5 20.500 4 26 6 28 11 28 17c1.500 1.500 1 5-.7 5.500h-2V18c-5 .5-9.500-1-13-5C11 15.500 9 18 5 19v3.500H2.700C.8 22 .5 18.500 2 17 2 11 4 6 9 4z" fill="#1989fa" />
          <path d="M4.500 22c1 5 5.500 9.300 10.500 9.300S24.800 27 25.500 22c-1 4-5 5.500-9 6" fill="none" stroke="#1989fa" strokeWidth="1.200" />
          <circle cx="15.500" cy="27.800" r="1.500" fill="#1989fa" />
        </Glyph>
      </Support>
    </Window>
  );
}
